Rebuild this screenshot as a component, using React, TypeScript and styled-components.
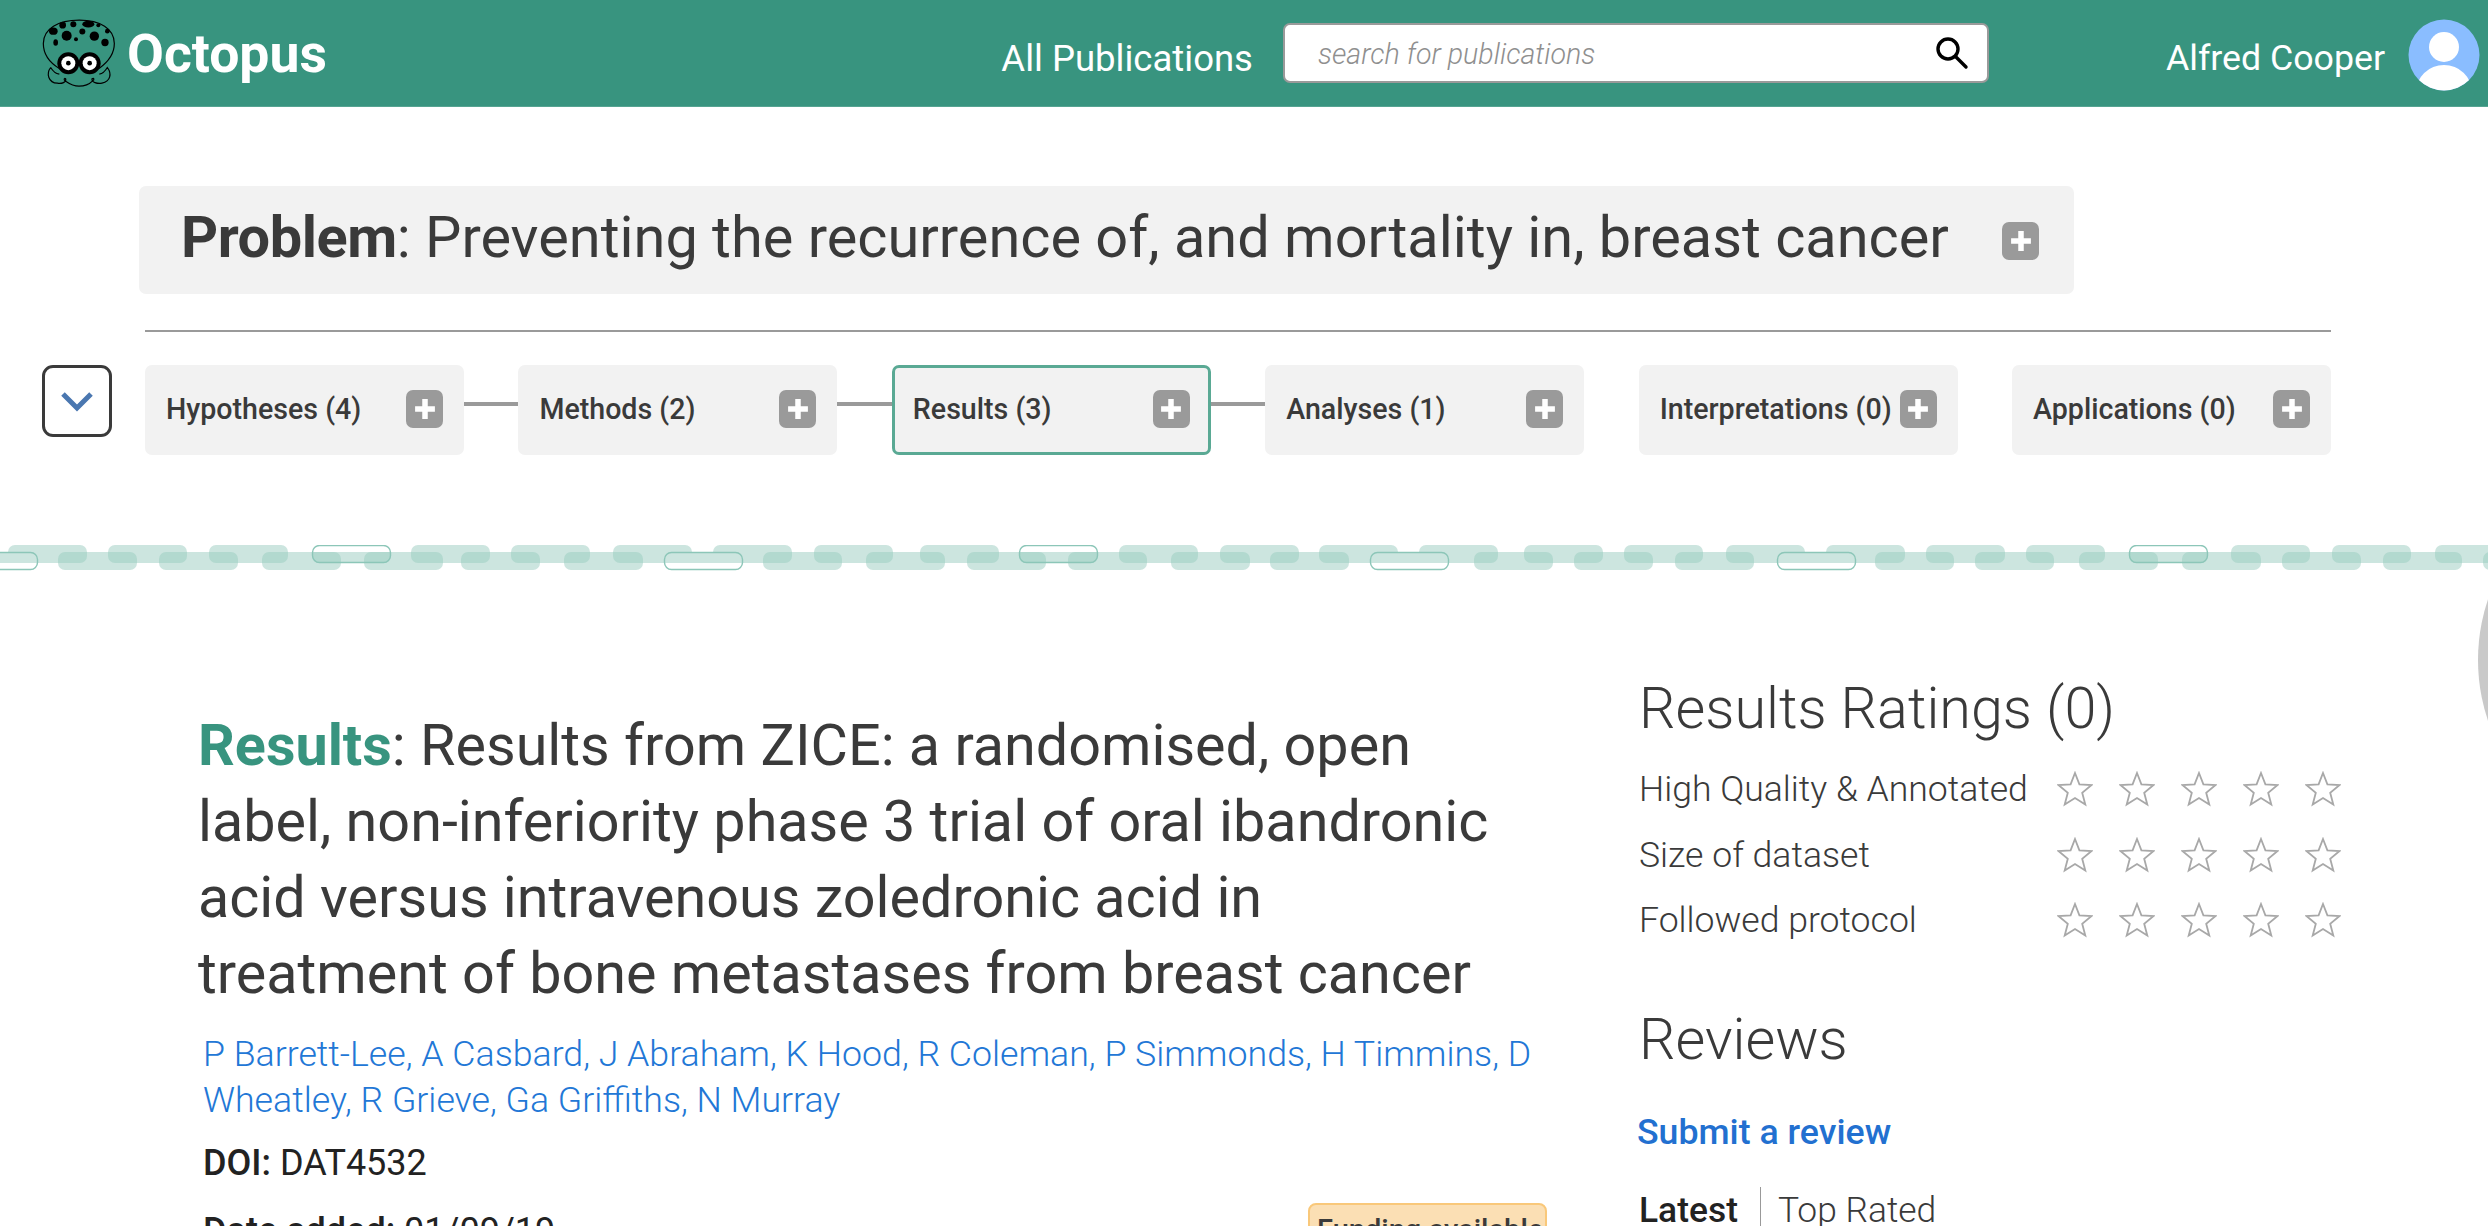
import React from "react";
import styled, { createGlobalStyle } from "styled-components";

const Global = createGlobalStyle`
  html, body { margin: 0; padding: 0; background: #fff; overflow: hidden; }
  #root { height: 1226px; }
  * { box-sizing: border-box; }
`;

const Page = styled.div`
  position: relative;
  width: 2488px;
  height: 1226px;
  overflow: hidden;
  font-family: Roboto, "Liberation Sans", sans-serif;
  color: #3a3a3a;
`;

const Header = styled.header`
  height: 107px;
  background: #38947f;
  border-bottom: 1px solid #56a492;
  display: flex;
  align-items: center;
  padding: 0 8px 0 40px;
`;

const Brand = styled.div`
  display: flex;
  align-items: center;
  gap: 7px;
  margin-right: auto;
  color: #fff;
  font-size: 53.5px;
  font-weight: 700;
`;

const NavLink = styled.span`
  color: #fff;
  font-size: 36.5px;
  margin: 10px 30px 0 0;
`;

const Search = styled.div`
  width: 706px;
  height: 60px;
  background: #fff;
  border: 2px solid #9a9a9a;
  border-radius: 7px;
  display: flex;
  align-items: center;
  justify-content: space-between;
  padding: 0 18px 0 33px;
  margin-right: 177px;
`;

const Placeholder = styled.span`
  margin-top: 2px;
  font-size: 28.6px;
  font-style: italic;
  font-weight: 300;
  color: #8f8f8f;
`;

const UserName = styled.span`
  color: #fff;
  font-size: 35.7px;
  margin: 10px 23px 0 0;
`;

const AvatarSlot = styled.span`
  display: flex;
  margin-top: 4px;
`;

const ProblemBar = styled.div`
  width: 1935px;
  height: 108px;
  margin: 79px 0 0 139px;
  background: #f2f2f2;
  border-radius: 7px;
  display: flex;
  align-items: center;
  justify-content: space-between;
  padding: 0 35px 0 42px;
`;

const ProblemPlus = styled.span`
  display: flex;
  margin-top: 2px;
`;

const ProblemTitle = styled.h1`
  margin: 0 0 6px;
  font-size: 57.7px;
  font-weight: 400;
  color: #3a3a3a;
  b { font-weight: 700; letter-spacing: -0.45px; }
`;

const Rule = styled.hr`
  width: 2186px;
  height: 2px;
  margin: 36px 0 0 145px;
  border: 0;
  background: #9a9a9a;
`;

const Flow = styled.div`
  display: flex;
  align-items: flex-start;
  margin-top: 33px;
  padding-left: 42px;
  width: 2331px;
`;

const Toggle = styled.div`
  width: 70px;
  height: 72px;
  margin-right: 33px;
  flex: none;
  border: 3px solid #3a3a3a;
  border-radius: 11px;
  display: flex;
  align-items: center;
  justify-content: center;
`;

const Stage = styled.div<{ $active?: boolean }>`
  flex: none;
  width: 319px;
  height: 90px;
  background: #f2f2f2;
  border-radius: 7px;
  border: ${(p) => (p.$active ? "3px solid #5aa994" : "0")};
  display: flex;
  align-items: center;
  justify-content: space-between;
  padding: ${(p) => (p.$active ? "0 18px 2px" : "0 21px 2px")};
`;

const StageLabel = styled.span`
  font-size: 28.6px;
  font-weight: 500;
  color: #3a3a3a;
  white-space: nowrap;
`;

const Connector = styled.div<{ $on: boolean }>`
  flex: 1;
  height: 4px;
  margin-top: 37px;
  background: ${(p) => (p.$on ? "#9a9a9a" : "transparent")};
`;

const Plus = styled.span`
  flex: none;
  width: 37px;
  height: 38px;
  border-radius: 7px;
  background: #9a9a9a;
  display: flex;
  align-items: center;
  justify-content: center;
`;

const DashBand = styled.svg`
  display: block;
  width: 2488px;
  height: 26px;
  margin-top: 90px;
`;

const Main = styled.main`
  display: flex;
  align-items: flex-start;
  padding-left: 198px;
`;

const Article = styled.article`
  flex: none;
  width: 1349px;
  margin-right: 92px;
  padding-top: 137px;
`;

const ArticleTitle = styled.h2`
  margin: 0;
  font-size: 57.5px;
  line-height: 76px;
  font-weight: 400;
  color: #3a3a3a;
  white-space: nowrap;
  b { color: #38947f; font-weight: 700; }
`;

const Authors = styled.p`
  margin: 18.5px 0 0 5px;
  width: 1345px;
  font-size: 35.7px;
  line-height: 46px;
  font-weight: 300;
  color: #2277d6;
`;

const Meta = styled.p<{ $gap: number }>`
  margin: ${(p) => p.$gap}px 0 0 5px;
  font-size: 36px;
  line-height: 46px;
  color: #222;
  b { font-weight: 500; }
`;

const MetaRow = styled.div`
  display: flex;
  justify-content: space-between;
  align-items: flex-start;
`;

const Badge = styled.span`
  margin-top: 17px;
  width: 239px;
  height: 60px;
  border: 2px solid #f9c87a;
  border-radius: 8px;
  background: #fbdfb4;
  font-size: 29px;
  font-weight: 500;
  color: #3a3a3a;
  padding: 8px 0 0 7px;
  white-space: nowrap;
`;

const Side = styled.aside`
  flex: none;
  width: 800px;
  padding-top: 103px;
`;

const SideHeading = styled.h3<{ $gap?: number }>`
  margin: ${(p) => p.$gap ?? 0}px 0 0;
  font-size: 57.5px;
  line-height: 70px;
  font-weight: 300;
  color: #3a3a3a;
`;

const Rating = styled.div`
  display: flex;
  align-items: center;
  height: 65.5px;
`;

const RatingLabel = styled.span`
  flex: none;
  width: 417.5px;
  font-size: 35.6px;
  font-weight: 300;
  color: #3a3a3a;
  white-space: nowrap;
`;

const Stars = styled.span`
  display: flex;
  gap: 26px;
`;

const Ratings = styled.div`
  margin-top: 12.5px;
`;

const SubmitLink = styled.a`
  display: block;
  margin: 34px 0 0 -2px;
  font-size: 35.7px;
  line-height: 46px;
  font-weight: 500;
  color: #2270d0;
`;

const Tabs = styled.div`
  display: flex;
  align-items: center;
  margin-top: 32px;
  font-size: 35.4px;
  line-height: 46px;
`;

const Tab = styled.span<{ $active?: boolean }>`
  font-weight: ${(p) => (p.$active ? 500 : 300)};
  color: ${(p) => (p.$active ? "#222" : "#3a3a3a")};
  & + & {
    margin-left: 22px;
    padding-left: 17px;
    border-left: 1px solid #999;
  }
`;

const SideCircle = styled.div`
  position: absolute;
  left: 2478px;
  top: 470px;
  width: 380px;
  height: 380px;
  border-radius: 50%;
  background: #c9c9c9;
`;

const OctopusLogo = () => (
  <svg width="80" height="77" viewBox="60 15 240 230" fill="none">
    <path
      d="M118 175C85 155 70 130 70 100C70 55 115 30 178 30C240 30 283 55 283 100C283 130 265 155 237 175"
      stroke="#000"
      strokeWidth="3.6"
    />
    <g fill="#000">
      <ellipse cx="100" cy="63" rx="13" ry="11" />
      <circle cx="128" cy="45" r="10" />
      <circle cx="160" cy="42" r="9" />
      <ellipse cx="205" cy="42" rx="18" ry="10" />
      <circle cx="235" cy="45" r="6" />
      <circle cx="262" cy="63" r="7" />
      <circle cx="140" cy="77" r="15" />
      <circle cx="187" cy="64" r="9" />
      <circle cx="223" cy="78" r="14" />
      <circle cx="168" cy="87" r="6" />
      <ellipse cx="107" cy="97" rx="7" ry="10" />
      <circle cx="255" cy="97" r="11" />
      <circle cx="145" cy="159" r="33" />
      <circle cx="209" cy="159" r="33" />
    </g>
    <circle cx="145" cy="159" r="21" fill="#fff" />
    <circle cx="209" cy="159" r="21" fill="#fff" />
    <circle cx="145" cy="159" r="7" fill="#000" />
    <circle cx="209" cy="159" r="7" fill="#000" />
    <path
      d="M92 172C78 190 85 218 112 219C125 222 140 216 137 206C132 202 130 210 137 213C150 222 160 228 177 228C195 228 208 222 218 212C224 208 222 202 216 206C214 216 232 222 246 219C272 214 276 190 262 172C256 182 250 190 238 192M92 172C98 182 106 190 118 192"
      stroke="#000"
      strokeWidth="3.6"
    />
  </svg>
);

const SearchIcon = () => (
  <svg width="34" height="34" viewBox="0 0 34 34" fill="none" stroke="#000" strokeWidth="3.4">
    <circle cx="13" cy="13" r="10" />
    <path d="M20.5 20.5L31 31" strokeLinecap="round" />
  </svg>
);

const Avatar = () => (
  <svg width="72" height="72" viewBox="0 0 72 72">
    <defs>
      <clipPath id="avatar-clip">
        <circle cx="36" cy="36" r="35.5" />
      </clipPath>
    </defs>
    <circle cx="36" cy="36" r="35.5" fill="#8abdff" />
    <g clipPath="url(#avatar-clip)" fill="#fff">
      <circle cx="36" cy="28" r="15" />
      <ellipse cx="36" cy="73" rx="28" ry="27" />
    </g>
  </svg>
);

const PlusIcon = () => (
  <svg width="22" height="22" viewBox="0 0 20 20">
    <path d="M7.5 1h5v6.5H19v5h-6.5V19h-5v-6.5H1v-5h6.5z" fill="#fff" />
  </svg>
);

const Chevron = () => (
  <svg width="32" height="21" viewBox="0 0 32 21" fill="none">
    <path d="M2 3L16 17L30 3" stroke="#4a77b0" strokeWidth="5" />
  </svg>
);

const Star = () => (
  <svg width="36" height="36" viewBox="0 0 36 36" fill="#fff" stroke="#a8a8a8" strokeWidth="1.8">
    <path d="M18 2L22.4 13.3L34.6 14L25.2 21.8L28.3 33.6L18 27L7.7 33.6L10.8 21.8L1.4 14L13.6 13.3Z" />
  </svg>
);

const upper = [8, 108, 209, 312, 411, 511, 613, 713, 814, 920, 1019, 1119, 1220, 1319, 1419, 1524, 1624, 1726, 1826, 1926, 2026, 2129, 2231, 2332, 2435];
const lower = [-41, 58, 159, 262, 364, 461, 564, 664, 763, 866, 967, 1068, 1171, 1270, 1370, 1474, 1574, 1675, 1777, 1875, 1975, 2079, 2182, 2282, 2383, 2483];
const outlined = new Set([312, 1019, 2129, -41, 664, 1370, 1777]);

const Dashes = () => (
  <DashBand viewBox="0 544 2488 26">
    <defs>
      <clipPath id="upper-dashes">
        {upper.map((x) => (
          <rect key={x} x={x} y="544" width="79" height="18" rx="7" />
        ))}
      </clipPath>
    </defs>
    <rect x="0" y="551" width="2488" height="11" fill="#cce5df" />
    {upper
      .filter((x) => !outlined.has(x))
      .map((x) => (
        <rect key={x} x={x} y="544" width="79" height="18" rx="7" fill="#cce5df" />
      ))}
    {lower
      .filter((x) => !outlined.has(x))
      .map((x) => (
        <rect key={x} x={x} y="551" width="79" height="18" rx="7" fill="#cce5df" />
      ))}
    <g clipPath="url(#upper-dashes)">
      {lower
        .filter((x) => !outlined.has(x))
        .map((x) => (
          <rect key={x} x={x} y="551" width="79" height="18" rx="7" fill="#b2d9cf" />
        ))}
    </g>
    {upper
      .filter((x) => outlined.has(x))
      .map((x) => (
        <rect key={x} x={x + 0.5} y="544.5" width="78" height="17" rx="7" fill="none" stroke="#8cc6b8" strokeWidth="1.4" />
      ))}
    {lower
      .filter((x) => outlined.has(x))
      .map((x) => (
        <rect key={x} x={x + 0.5} y="551.5" width="78" height="17" rx="7" fill="none" stroke="#8cc6b8" strokeWidth="1.4" />
      ))}
  </DashBand>
);

const stages = [
  { name: "Hypotheses (4)", link: true },
  { name: "Methods (2)", link: true },
  { name: "Results (3)", link: true, active: true },
  { name: "Analyses (1)", link: false },
  { name: "Interpretations (0)", link: false },
  { name: "Applications (0)" },
];

const ratings = ["High Quality & Annotated", "Size of dataset", "Followed protocol"];

export default function App() {
  return (
    <Page>
      <Global />
      <Header>
        <Brand>
          <OctopusLogo />
          Octopus
        </Brand>
        <NavLink>All Publications</NavLink>
        <Search>
          <Placeholder>search for publications</Placeholder>
          <SearchIcon />
        </Search>
        <UserName>Alfred Cooper</UserName>
        <AvatarSlot>
          <Avatar />
        </AvatarSlot>
      </Header>

      <ProblemBar>
        <ProblemTitle>
          <b>Problem</b>: Preventing the recurrence of, and mortality in, breast cancer
        </ProblemTitle>
        <ProblemPlus>
          <Plus>
            <PlusIcon />
          </Plus>
        </ProblemPlus>
      </ProblemBar>
      <Rule />

      <Flow>
        <Toggle>
          <Chevron />
        </Toggle>
        {stages.map((s, i) => (
          <React.Fragment key={s.name}>
            <Stage $active={s.active}>
              <StageLabel>{s.name}</StageLabel>
              <Plus>
                <PlusIcon />
              </Plus>
            </Stage>
            {i < stages.length - 1 && <Connector $on={!!s.link} />}
          </React.Fragment>
        ))}
      </Flow>

      <Dashes />

      <Main>
        <Article>
          <ArticleTitle>
            <b>Results</b>: Results from ZICE: a randomised, open
            <br />
            label, non-inferiority phase 3 trial of oral ibandronic
            <br />
            acid versus intravenous zoledronic acid in
            <br />
            treatment of bone metastases from breast cancer
          </ArticleTitle>
          <Authors>
            P Barrett-Lee, A Casbard, J Abraham, K Hood, R Coleman, P Simmonds, H Timmins, D
            <br />
            Wheatley, R Grieve, Ga Griffiths, N Murray
          </Authors>
          <Meta $gap={17.5}>
            <b>DOI:</b> DAT4532
          </Meta>
          <MetaRow>
            <Meta $gap={22}>
              <b>Date added:</b> 01/09/19
            </Meta>
            <Badge>Funding available</Badge>
          </MetaRow>
        </Article>

        <Side>
          <SideHeading>Results Ratings (0)</SideHeading>
          <Ratings>
            {ratings.map((r) => (
              <Rating key={r}>
                <RatingLabel>{r}</RatingLabel>
                <Stars>
                  {[0, 1, 2, 3, 4].map((n) => (
                    <Star key={n} />
                  ))}
                </Stars>
              </Rating>
            ))}
          </Ratings>
          <SideHeading $gap={51.5}>Reviews</SideHeading>
          <SubmitLink>Submit a review</SubmitLink>
          <Tabs>
            <Tab $active>Latest</Tab>
            <Tab>Top Rated</Tab>
          </Tabs>
        </Side>
      </Main>
      <SideCircle />
    </Page>
  );
}
